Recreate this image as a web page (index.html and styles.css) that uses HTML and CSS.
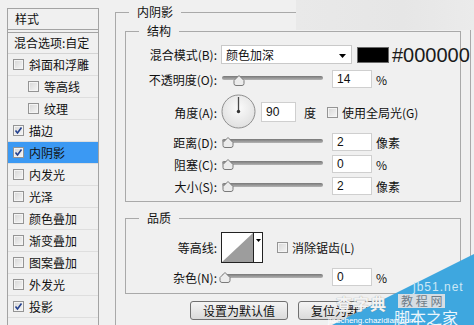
FILE: index.html
```html
<!DOCTYPE html>
<html lang="zh-CN">
<head>
<meta charset="utf-8">
<title>图层样式 - 内阴影</title>
<link rel="stylesheet" href="styles.css">
</head>
<body>
<div class="dialog">
  <aside class="style-list">
    <div class="list-head">样式</div>
    <div class="list-blend">混合选项:自定</div>
    <div class="list-item"><span class="cb"></span>斜面和浮雕</div>
    <div class="list-item sub"><span class="cb"></span>等高线</div>
    <div class="list-item sub"><span class="cb"></span>纹理</div>
    <div class="list-item"><span class="cb checked"><svg viewBox="0 0 11 11" width="11" height="11"><path d="M2.5 5.5 L4.5 8 L8.5 2.5" fill="none" stroke="#23408e" stroke-width="1.6"/></svg></span>描边</div>
    <div class="list-item active"><span class="cb checked"><svg viewBox="0 0 11 11" width="11" height="11"><path d="M2.5 5.5 L4.5 8 L8.5 2.5" fill="none" stroke="#23408e" stroke-width="1.6"/></svg></span>内阴影</div>
    <div class="list-item"><span class="cb"></span>内发光</div>
    <div class="list-item"><span class="cb"></span>光泽</div>
    <div class="list-item"><span class="cb"></span>颜色叠加</div>
    <div class="list-item"><span class="cb"></span>渐变叠加</div>
    <div class="list-item"><span class="cb"></span>图案叠加</div>
    <div class="list-item"><span class="cb"></span>外发光</div>
    <div class="list-item"><span class="cb checked"><svg viewBox="0 0 11 11" width="11" height="11"><path d="M2.5 5.5 L4.5 8 L8.5 2.5" fill="none" stroke="#23408e" stroke-width="1.6"/></svg></span>投影</div>
  </aside>

  <main class="settings">
    <fieldset class="group outer">
      <legend>内阴影</legend>

      <fieldset class="group inner struct">
        <legend>结构</legend>
        <div class="row r-blend">
          <span class="label">混合模式(B):</span>
          <div class="select"><span>颜色加深</span><svg class="caret" width="7" height="4" viewBox="0 0 7 4"><path d="M0 0 H7 L3.5 4 Z" fill="#000"/></svg></div>
          <span class="swatch"></span>
          <span class="hex">#000000</span>
        </div>
        <div class="row r-slider">
          <span class="label">不透明度(O):</span>
          <div class="slider"><div class="track"></div><svg class="thumb t-14" width="12" height="11" viewBox="0 0 12 11"><path d="M6 0.5 L11 5.5 V8.5 Q11 10.5 9 10.5 H3 Q1 10.5 1 8.5 V5.5 Z" fill="#ececec" stroke="#7a7a7a"/></svg></div>
          <span class="field">14</span>
          <span class="unit">%</span>
        </div>
        <div class="row r-angle">
          <span class="label">角度(A):</span>
          <svg class="dial" width="36" height="36" viewBox="0 0 36 36">
            <defs><radialGradient id="dg" cx="50%" cy="40%" r="60%"><stop offset="0" stop-color="#fbfbfb"/><stop offset="1" stop-color="#e0e0e0"/></radialGradient></defs>
            <circle cx="17.5" cy="17.5" r="16.5" fill="url(#dg)" stroke="#8e8e8e"/>
            <line x1="17.5" y1="17.5" x2="17.5" y2="3" stroke="#4a4a4a" stroke-width="1.3"/>
            <circle cx="17.5" cy="17.5" r="1.7" fill="#333"/>
          </svg>
          <span class="field f-angle">90</span>
          <span class="unit u-deg">度</span>
          <span class="cb"></span>
          <span class="cb-label">使用全局光(G)</span>
        </div>
        <div class="row r-slider">
          <span class="label">距离(D):</span>
          <div class="slider"><div class="track"></div><svg class="thumb" width="12" height="11" viewBox="0 0 12 11"><path d="M6 0.5 L11 5.5 V8.5 Q11 10.5 9 10.5 H3 Q1 10.5 1 8.5 V5.5 Z" fill="#ececec" stroke="#7a7a7a"/></svg></div>
          <span class="field">2</span>
          <span class="unit">像素</span>
        </div>
        <div class="row r-slider">
          <span class="label">阻塞(C):</span>
          <div class="slider"><div class="track"></div><svg class="thumb" width="12" height="11" viewBox="0 0 12 11"><path d="M6 0.5 L11 5.5 V8.5 Q11 10.5 9 10.5 H3 Q1 10.5 1 8.5 V5.5 Z" fill="#ececec" stroke="#7a7a7a"/></svg></div>
          <span class="field">0</span>
          <span class="unit">%</span>
        </div>
        <div class="row r-slider">
          <span class="label">大小(S):</span>
          <div class="slider"><div class="track"></div><svg class="thumb" width="12" height="11" viewBox="0 0 12 11"><path d="M6 0.5 L11 5.5 V8.5 Q11 10.5 9 10.5 H3 Q1 10.5 1 8.5 V5.5 Z" fill="#ececec" stroke="#7a7a7a"/></svg></div>
          <span class="field">2</span>
          <span class="unit">像素</span>
        </div>
      </fieldset>

      <fieldset class="group inner quality">
        <legend>品质</legend>
        <div class="row r-contour">
          <span class="label">等高线:</span>
          <div class="contour">
            <svg class="curve" width="31" height="29" viewBox="0 0 31 29"><rect width="31" height="29" fill="#fff"/><path d="M0 29 L31 0 V29 Z" fill="#9d9d9d"/></svg>
            <span class="contour-drop"><svg width="5" height="3" viewBox="0 0 5 3"><path d="M0 0 H5 L2.5 3 Z" fill="#000"/></svg></span>
          </div>
          <span class="cb cb-aa"></span>
          <span class="cb-label">消除锯齿(L)</span>
        </div>
        <div class="row r-slider r-noise">
          <span class="label">杂色(N):</span>
          <div class="slider"><div class="track"></div><svg class="thumb t-0l" width="12" height="11" viewBox="0 0 12 11"><path d="M6 0.5 L11 5.5 V8.5 Q11 10.5 9 10.5 H3 Q1 10.5 1 8.5 V5.5 Z" fill="#ececec" stroke="#7a7a7a"/></svg></div>
          <span class="field">0</span>
          <span class="unit">%</span>
        </div>
      </fieldset>

      <div class="buttons">
        <button class="btn">设置为默认值</button>
        <button class="btn">复位为默认值</button>
      </div>
    </fieldset>
  </main>
</div>

<div class="top-patch"></div>

<div class="watermark">
  <svg class="wm-shape" width="150" height="72" viewBox="0 0 150 72"><path d="M150 1 L150 72 L8 72 Z" fill="#3ea7df"/></svg>
  <span class="wm-jb">jb51.net</span>
  <span class="wm-cha">查字典</span>
  <span class="wm-jc">教 程 网</span>
  <span class="wm-jbzj">脚本之家</span>
  <span class="wm-url">jiaocheng.chazidian.com</span>
</div>
</body>
</html>
```

FILE: styles.css
```css
* { box-sizing: border-box; }

html, body {
  margin: 0;
  padding: 0;
}

body {
  width: 474px;
  height: 325px;
  overflow: hidden;
  position: relative;
  background: #f0f0f0;
  font-family: "Noto Sans CJK SC", "Liberation Sans", sans-serif;
  font-size: 12px;
  color: #111;
}

.dialog {
  display: flex;
  align-items: flex-start;
  height: 325px;
  overflow: hidden;
}

/* ---------- left style list ---------- */
.style-list {
  flex: none;
  margin: 8px 0 0 7px;
  width: 92px;
  height: 317px;
  overflow: hidden;
  border: 1px solid #a3a3a3;
  border-bottom: none;
  background: #f0f0f0;
}

.list-head {
  height: 21px;
  line-height: 20px;
  padding-left: 7px;
  border-bottom: 1px solid #a3a3a3;
}

.list-blend {
  margin-top: 2px;
  height: 22px;
  line-height: 20px;
  padding-left: 6px;
  border-top: 1px solid #a3a3a3;
  border-bottom: 1px solid #d4d4d4;
}

.list-item {
  display: flex;
  align-items: center;
  height: 22px;
  padding-left: 5px;
  border-bottom: 1px solid #dedede;
  line-height: 21px;
}

.list-item.sub { padding-left: 20px; }

.list-item.active { background: #3b99f3; }

.cb {
  flex: none;
  display: inline-block;
  width: 11px;
  height: 11px;
  border: 1px solid #949494;
  background: linear-gradient(135deg, #d6d6d6, #f6f6f6);
  box-shadow: inset 0 0 0 1px #f4f4f4;
  position: relative;
}

.list-item .cb { margin-right: 5px; }

.cb svg {
  position: absolute;
  left: -1px;
  top: -1px;
}

/* ---------- right settings ---------- */
.settings {
  flex: none;
  margin-left: 16px;
  width: 356px;
}

.group {
  margin: 0;
  padding: 0;
  min-width: 0;
  border: 1px solid #a9a9a9;
}

.group legend {
  margin-left: 13px;
  padding: 0 8px;
  font-size: 12px;
  line-height: 16px;
  color: #111;
}

.outer {
  margin-top: 4px;
  width: 356px;
  height: 322px;
}

.inner {
  margin: 0 9px;
}

.struct {
  margin-top: 3px;
  padding-bottom: 6px;
}

.quality {
  margin-top: 8px;
  padding-bottom: 7px;
}

.row {
  display: flex;
  align-items: center;
}

.label {
  flex: none;
  width: 91px;
  margin-right: 4px;
  text-align: right;
  white-space: nowrap;
}

.r-blend { margin-top: 5px; height: 21px; }
.struct .r-blend + .r-slider { margin-top: 5px; }
.r-angle { margin-top: 7px; height: 34px; }
.r-slider { margin-top: 4px; height: 18px; }
.r-contour { margin-top: 6px; height: 31px; }
.r-noise { margin-top: 5px; }

.select {
  flex: none;
  width: 131px;
  height: 19px;
  display: flex;
  align-items: center;
  justify-content: space-between;
  padding: 0 5px 0 4px;
  background: #fff;
  border: 1px solid #c9c9c9;
}

.caret { margin-top: 2px; }

.swatch {
  flex: none;
  margin-left: 5px;
  width: 32px;
  height: 16px;
  background: #000;
  border: 1px solid #6a6a6a;
}

.hex {
  margin-left: 3px;
  font-family: "Liberation Sans", Arial, sans-serif;
  font-size: 20px;
  line-height: 20px;
  color: #1a1a1a;
  white-space: nowrap;
}

.slider {
  flex: none;
  position: relative;
  margin-left: 1px;
  width: 101px;
  height: 18px;
}

.track {
  margin-top: 6px;
  height: 4px;
  border-radius: 2px;
  background: linear-gradient(#777, #b4b4b4);
}

.thumb {
  position: absolute;
  top: 4px;
  left: 0;
}

.thumb.t-14 { left: 11px; top: 5px; }
.thumb.t-0l { left: -3px; }

.field {
  flex: none;
  margin-left: 9px;
  width: 40px;
  height: 18px;
  padding-left: 4px;
  background: #fff;
  border: 1px solid #cfcfcf;
  font-family: "Liberation Sans", Arial, sans-serif;
  font-size: 12px;
  line-height: 16px;
  color: #111;
}

.unit {
  margin-left: 4px;
  white-space: nowrap;
}

.dial { flex: none; margin-left: 0; }

.field.f-angle {
  margin-left: 4px;
  width: 35px;
  height: 20px;
  line-height: 18px;
}

.unit.u-deg { margin-left: 8px; margin-right: 11px; }

.cb-label {
  margin-left: 4px;
  white-space: nowrap;
}

.contour {
  flex: none;
  display: flex;
  width: 42px;
  height: 31px;
  border: 1px solid #222;
  background: #fff;
}

.curve { display: block; }

.contour-drop {
  flex: 1;
  display: flex;
  justify-content: center;
  padding-top: 6px;
  border-left: 1px solid #222;
}

.contour-drop svg { display: block; }

.cb-aa { margin-left: 14px; }

.buttons {
  margin-top: 7px;
  display: flex;
  justify-content: center;
  gap: 10px;
}

.btn {
  width: 98px;
  height: 19px;
  padding: 0;
  border: 1px solid #707070;
  border-radius: 3px;
  background: linear-gradient(#f4f4f4, #dadada);
  font-family: "Noto Sans CJK SC", sans-serif;
  font-size: 12px;
  line-height: 16px;
  color: #111;
}

/* ---------- overlays ---------- */
.top-patch {
  position: absolute;
  left: 296px;
  top: 0;
  width: 178px;
  height: 30px;
  background: linear-gradient(90deg, #e9e9e9, #e6e6e6 60%, #ebebeb);
}

.watermark {
  position: absolute;
  right: 0;
  bottom: 0;
  width: 150px;
  height: 72px;
  overflow: hidden;
}

.wm-shape {
  position: absolute;
  left: 0;
  top: 0;
}

.watermark span {
  position: absolute;
  white-space: nowrap;
}

.wm-jb {
  left: 89px;
  top: 28px;
  font-family: "Liberation Sans", sans-serif;
  font-size: 12px;
  line-height: 13px;
  color: #cde8f6;
  letter-spacing: 1px;
}

.wm-cha {
  left: 12px;
  top: 41px;
  font-size: 16px;
  line-height: 18px;
  font-weight: bold;
  color: #f3f3f3;
  text-shadow: 0 0 1px #888;
  letter-spacing: 1px;
}

.wm-jc {
  left: 74px;
  top: 41px;
  padding: 0 3px;
  background: #d6dde3;
  color: #6f7c88;
  font-size: 12px;
  line-height: 14px;
}

.wm-jbzj {
  left: 70px;
  top: 56px;
  font-size: 16px;
  line-height: 16px;
  color: #ffffff;
  opacity: 0.9;
}

.wm-url {
  left: 4px;
  top: 63px;
  font-family: "Liberation Sans", sans-serif;
  font-size: 8px;
  line-height: 9px;
  color: #ffffff;
}
```
